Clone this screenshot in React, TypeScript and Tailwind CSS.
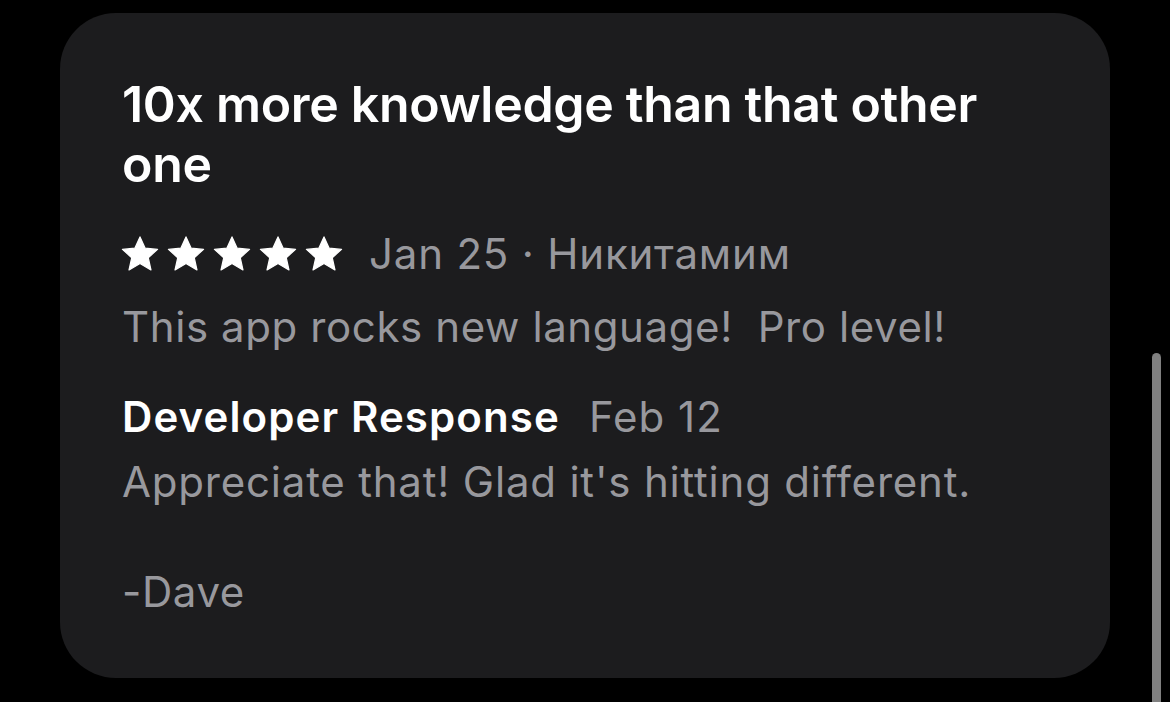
import React from 'react';

const Star = () => (
  <svg viewBox="0 0 24 23" className="h-[36px] w-[38px]" fill="#ffffff">
    <path d="M12 0.6l3.3 7.2 7.9.75-5.95 5.3 1.75 7.85L12 17.6l-7 4.1 1.75-7.85L0.8 8.55l7.9-.75z" stroke="#ffffff" strokeWidth="0.8" strokeLinejoin="round" />
  </svg>
);

const App = () => {
  return (
    <div className="relative h-[702px] w-[1170px] overflow-hidden bg-black font-['Inter','Noto_Sans',sans-serif]">
      <div className="absolute right-[9px] top-[353px] h-[360px] w-[9px] rounded-full bg-[#808080]" />
      <div className="ml-[60px] mt-[13px] h-[665px] w-[1050px] rounded-[56px] bg-[#1c1c1e] pl-[62px] pr-[90px] pt-[61px]">
        <h1 className="text-[50px] font-semibold leading-[60px] tracking-[-0.3px] text-white">
          10x more knowledge than that other one
        </h1>
        <div className="mt-[37px] flex h-[46px] items-center">
          <div className="-ml-[1px] flex gap-[8px]">
            <Star />
            <Star />
            <Star />
            <Star />
            <Star />
          </div>
          <span className="ml-[26px] text-[42px] leading-[46px] tracking-[0.8px] text-[#98989d]">
            Jan 25 · Никитамим
          </span>
        </div>
        <p className="mt-[27px] whitespace-pre text-[42px] leading-[46px] tracking-[0.6px] text-[#98989d]">
          {'This app rocks new language!  Pro level!'}
        </p>
        <div className="mt-[44px] flex items-baseline gap-[29px] text-[42px] leading-[46px]">
          <span className="font-semibold tracking-[1.1px] text-white">Developer Response</span>
          <span className="tracking-[1px] text-[#98989d]">Feb 12</span>
        </div>
        <p className="mt-[19px] text-[42px] leading-[46px] tracking-[0.8px] text-[#98989d]">
          Appreciate that! Glad it's hitting different.
        </p>
        <p className="mt-[64px] text-[42px] leading-[46px] tracking-[0.6px] text-[#98989d]">-Dave</p>
      </div>
    </div>
  );
};

export default App;
